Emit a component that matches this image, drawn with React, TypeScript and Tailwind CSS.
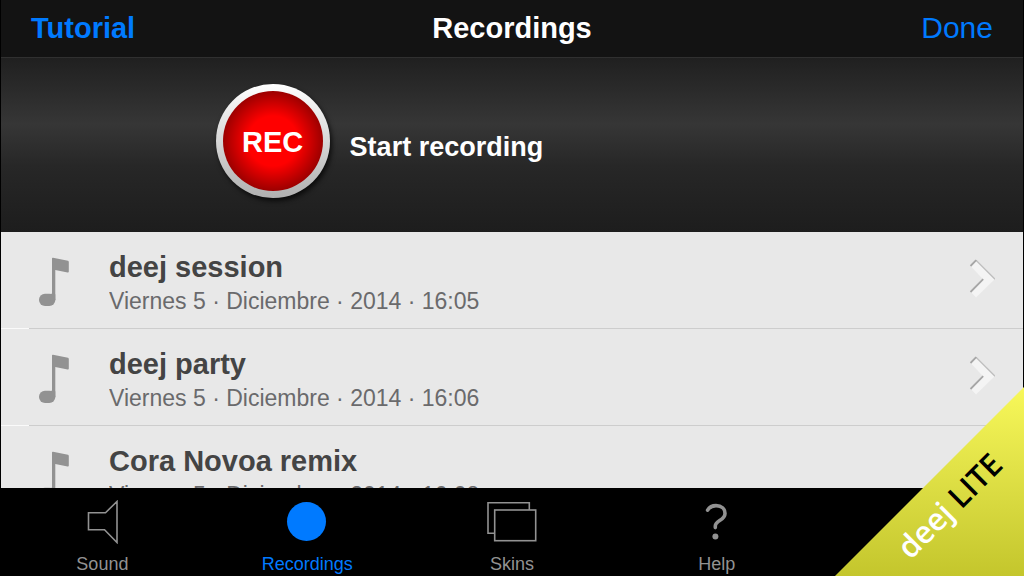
import { useState } from 'react'
import clsx from 'clsx'
import type { ReactNode } from 'react'

type TabId = 'sound' | 'recordings' | 'skins' | 'help'

const RECORDINGS = [
  { title: 'deej session', date: 'Viernes 5 · Diciembre · 2014 · 16:05' },
  { title: 'deej party', date: 'Viernes 5 · Diciembre · 2014 · 16:06' },
  { title: 'Cora Novoa remix', date: 'Viernes 5 · Diciembre · 2014 · 16:08' },
]

const TABS: Array<{ id: TabId; label: string; icon: ReactNode }> = [
  {
    id: 'sound',
    label: 'Sound',
    icon: (
      <path
        d="M12.5 12.7H29.5L41 1.5V42.5L28.5 29.8H12.5Z"
        fill="none"
        stroke="currentColor"
        strokeWidth="1.6"
      />
    ),
  },
  {
    id: 'recordings',
    label: 'Recordings',
    icon: <circle cx="25.5" cy="21.5" r="19.5" fill="currentColor" />,
  },
  {
    id: 'skins',
    label: 'Skins',
    icon: (
      <g fill="none" stroke="currentColor" strokeWidth="1.6">
        <path d="M8.5 33.2H2V2.8H43.3V10" />
        <rect x="8.7" y="10" width="41" height="30.7" />
      </g>
    ),
  },
  {
    id: 'help',
    label: 'Help',
    icon: (
      <>
        <path
          d="M16.6 10.2C18.5 7 21.4 5.6 25 5.6C30.6 5.6 34 8.8 34 13.4C34 20.4 24.3 20.6 24.3 26V27.6"
          fill="none"
          stroke="currentColor"
          strokeLinecap="round"
          strokeWidth="3.6"
        />
        <circle cx="24.4" cy="36.6" r="3" fill="currentColor" />
      </>
    ),
  },
]

function NoteIcon() {
  return (
    <svg width="30" height="68" viewBox="0 0 30 68" aria-hidden="true">
      <g fill="#929292">
        <path d="M13 9.2Q13 8.6 14 8.8L29 11.8Q29.8 12 29.8 13V22.4Q29.8 23.8 28.6 23.5L16.3 21V51H13Z" />
        <rect x="0" y="44.8" width="16.3" height="12.2" rx="6" />
        <rect x="11" y="44.8" width="5.3" height="7" rx="1" />
      </g>
    </svg>
  )
}

function ChevronIcon() {
  return (
    <svg width="26" height="68" viewBox="0 0 26 68" aria-hidden="true">
      <path d="M1.5 17L7 11L26 30L7 48.5L1.5 42.8L14 30.3Z" fill="#f4f4f4" />
      <g fill="none">
        <path d="M7 11.3L26 30.2" stroke="#bdbdbd" strokeWidth="1.2" />
        <path
          d="M1.5 17L7.2 11.2M1.5 43L14.2 30.2"
          stroke="#a6a6a6"
          strokeWidth="1.8"
        />
      </g>
    </svg>
  )
}

function RecordingRow({ title, date }: { title: string; date: string }) {
  return (
    <li>
      <button
        type="button"
        className="flex w-full items-center gap-10 pt-[17px] pr-7 pb-[11px] pl-[38px] text-left"
      >
        <NoteIcon />
        <span className="min-w-0 flex-1">
          <span className="block truncate text-[29px] leading-9 font-bold text-[#444444]">
            {title}
          </span>
          <span className="block truncate text-[23px] leading-8 text-[#6a6a6c]">
            {date}
          </span>
        </span>
        <ChevronIcon />
      </button>
      <div className="flex h-px">
        <span className="w-7 bg-[#fafafa]" />
        <span className="flex-1 bg-[#cdcdcd]" />
      </div>
    </li>
  )
}

function LiteRibbon() {
  return (
    <div className="pointer-events-none absolute right-0 bottom-0 flex size-[189px] items-center justify-center bg-linear-to-b from-[#f8f85a] to-[#c4c62c] pt-12 pl-10 [clip-path:polygon(100%_0,100%_100%,0_100%)]">
      <span className="-rotate-45 font-['Open_Sans',sans-serif] text-[31px] leading-none font-semibold whitespace-nowrap text-black">
        <span className="text-white">deej</span> LITE
      </span>
    </div>
  )
}

export default function App() {
  const [activeTab, setActiveTab] = useState<TabId>('recordings')

  return (
    <div className="relative flex h-screen flex-col overflow-hidden bg-black font-['Liberation_Sans',Arial,sans-serif]">
      <div className="flex min-h-0 flex-1 flex-col px-px">
        <header className="grid h-[58px] shrink-0 grid-cols-3 items-center border-b border-[#303030] bg-[#131313] px-[30px] pb-[2px]">
          <a
            href="#tutorial"
            className="justify-self-start text-[29px] leading-9 font-bold text-[#007aff]"
          >
            Tutorial
          </a>
          <h1 className="justify-self-center text-[29px] leading-9 font-bold text-white">
            Recordings
          </h1>
          <button
            type="button"
            className="justify-self-end text-[30px] leading-9 text-[#007aff]"
          >
            Done
          </button>
        </header>

        <section className="flex shrink-0 items-center gap-5 bg-[linear-gradient(#202020,#363636_38%,#272727_62%,#1d1d1d)] pt-[26px] pb-[34px] pl-[21%]">
          <button
            id="rec"
            type="button"
            className="size-[114px] rounded-full bg-linear-to-b from-white to-[#b0b0b0] p-[7px] shadow-[2px_3px_5px_rgba(0,0,0,0.7)]"
          >
            <span className="flex size-full items-center justify-center rounded-full bg-[radial-gradient(closest-side,#ff0000_50%,#9c0000)] pt-[2px] text-[29px] leading-9 font-bold text-white">
              REC
            </span>
          </button>
          <label htmlFor="rec" className="pt-3 text-[27px] font-bold text-white">
            Start recording
          </label>
        </section>

        <ul className="min-h-0 flex-1 overflow-hidden bg-[#e8e8e8]">
          {RECORDINGS.map((recording) => (
            <RecordingRow key={recording.title} {...recording} />
          ))}
        </ul>
      </div>

      <nav className="grid shrink-0 grid-cols-5 bg-black pt-3">
        {TABS.map(({ id, label, icon }) => (
          <button
            key={id}
            type="button"
            className={clsx(
              'flex flex-col items-center gap-2',
              activeTab === id ? 'text-[#007aff]' : 'text-[#929292]',
            )}
            onClick={() => setActiveTab(id)}
          >
            <svg width="52" height="44" viewBox="0 0 52 44" aria-hidden="true">
              {icon}
            </svg>
            <span className="text-[18px] leading-6">{label}</span>
          </button>
        ))}
      </nav>

      <LiteRibbon />
    </div>
  )
}
